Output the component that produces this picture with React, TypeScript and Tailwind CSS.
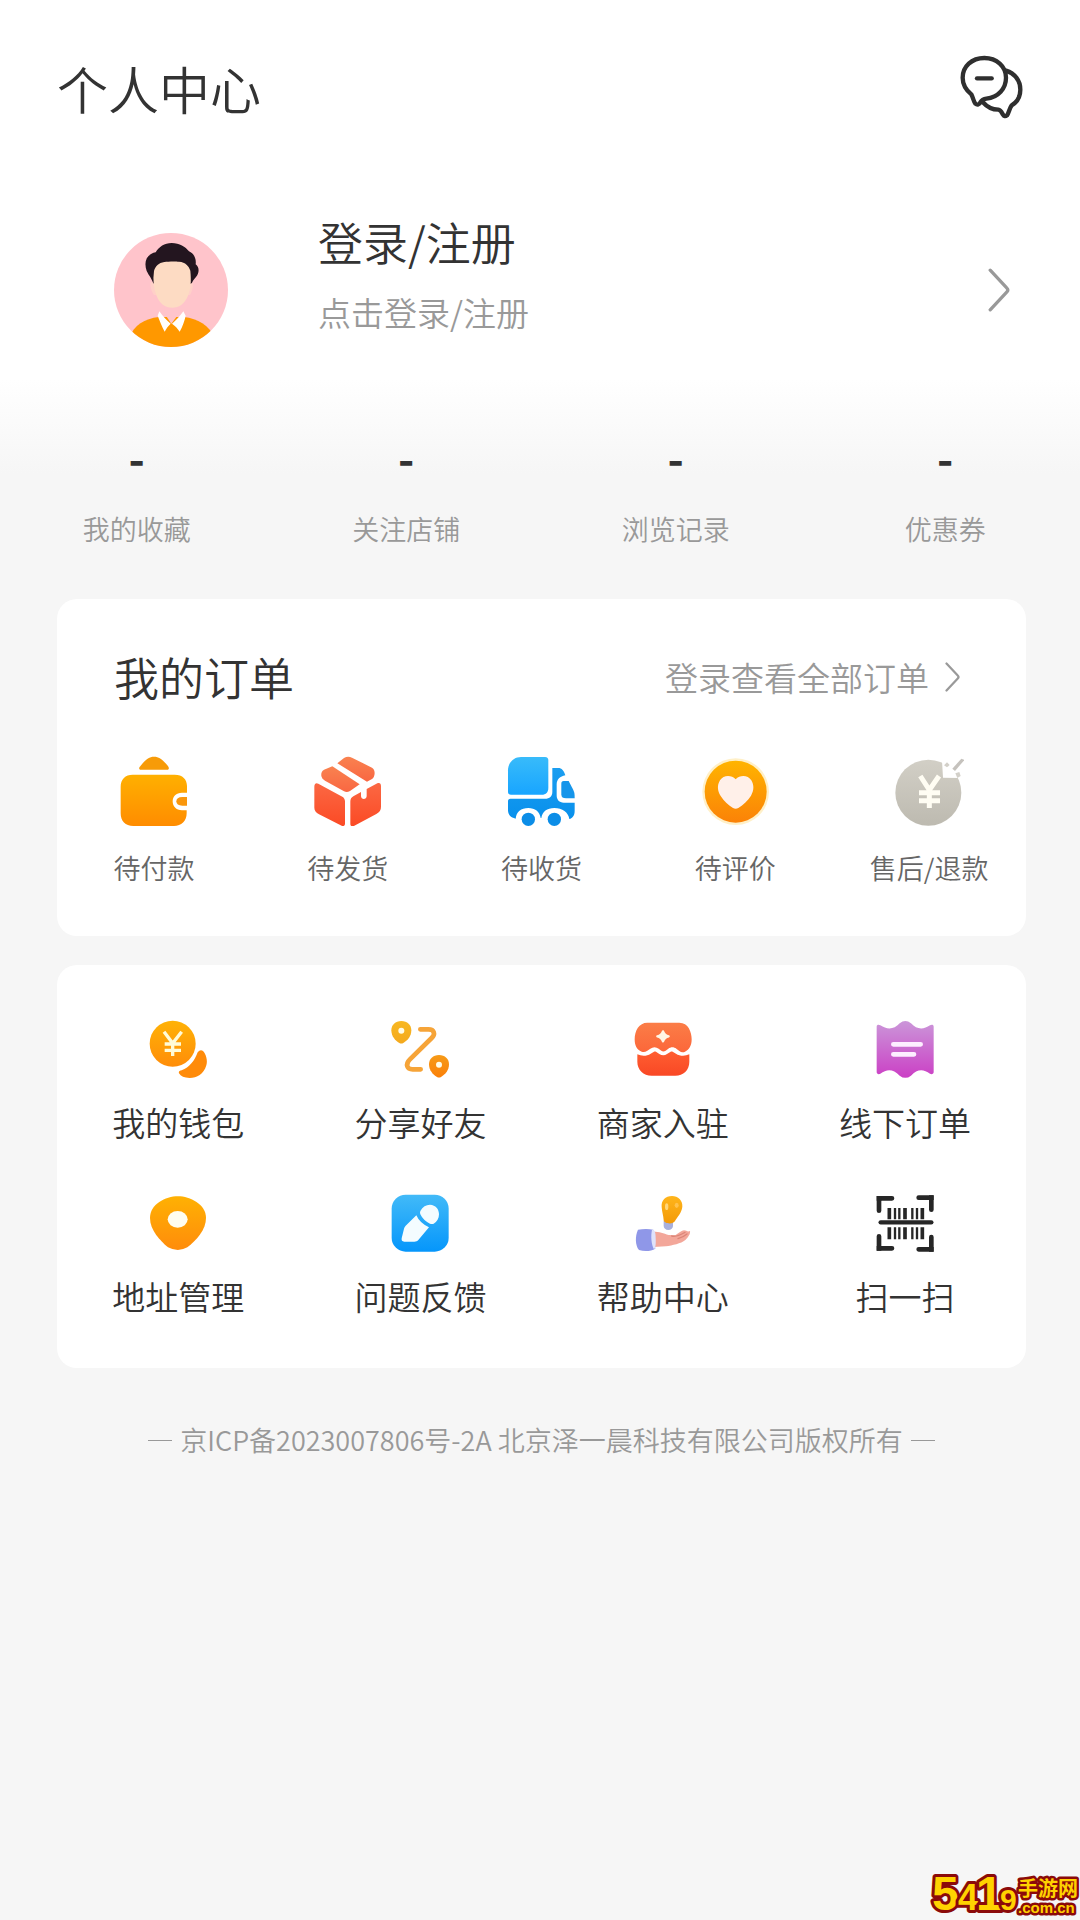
import type { ReactNode } from "react";

type Item = { name: string; icon: ReactNode };

const Gradient = ({ id, from, to }: { id: string; from: string; to: string }) => (
  <defs>
    <linearGradient id={id} x1="0" y1="0" x2="0" y2="1">
      <stop offset="0" stopColor={from} />
      <stop offset="1" stopColor={to} />
    </linearGradient>
  </defs>
);

const MessageIcon = () => (
  <svg
    viewBox="90 45 192 198"
    className="w-16 h-[66px]"
    fill="none"
    stroke="#2f2f2f"
    strokeWidth="13"
    strokeLinecap="round"
    strokeLinejoin="round"
  >
    <path d="M163 54C125 54 98 80 98 113c0 22 9 36 26 50 5 9 7 22 12 28 6 5 12 3 15-4 4-7 9-10 18-11 36-4 59-31 59-63 0-34-28-59-65-59Z" />
    <path d="M228 92c27 9 43 30 43 57 0 22-9 37-26 47-7 9-8 22-14 30-5 4-9 3-12-2-4-7-7-14-14-15-18 0-32-6-47-23" />
    <path d="M141 115h44" />
  </svg>
);

const Chevron = ({ className }: { className: string }) => (
  <svg
    viewBox="0 0 20 40"
    className={className}
    fill="none"
    stroke="#999"
    strokeWidth="3"
    strokeLinecap="round"
    strokeLinejoin="round"
  >
    <path d="M2 2 17 18q2 2 0 4L2 38" />
  </svg>
);

const Avatar = () => (
  <svg viewBox="72 69 342 342" className="size-[114px]">
    <clipPath id="avatar-clip">
      <circle cx="243" cy="240" r="171" />
    </clipPath>
    <g clipPath="url(#avatar-clip)">
      <rect x="72" y="69" width="342" height="342" fill="#ffc4cb" />
      <path d="M120 380c10-32 45-55 86-59h76c41 4 76 27 90 59v40H120Z" fill="#ff9800" />
      <path d="M224 285h42v26l-22 30-20-30Z" fill="#ffc4cb" />
      <path d="M208 304c10 14 22 28 34 37-7 6-13 14-18 24-9-16-16-36-21-48ZM280 304c-10 14-22 28-34 37 9 6 17 14 23 24 9-16 15-34 18-48Z" fill="#fff" />
      <path d="M190 221c-6-18-12-22-20-38-9-26-2-50 27-56 10-17 26-28 48-28 24 0 41 11 52 25 17 8 22 24 20 39 12 9 11 25 1 38-8 9-10 12-14 22Z" fill="#23151f" />
      <path d="M181 218c3-3 8 0 10 3h112c2-3 6-3 6 2 0 13-4 24-9 32H192c-6-8-11-21-11-37Z" fill="#ffd0c8" />
      <path d="M192 183c4-14 14-25 31-27 12-2 34-2 44-1 20 2 29 12 34 27 3 30 2 54-7 75-11 25-27 36-47 36-22 0-38-12-47-35-9-22-12-47-8-75Z" fill="#fddbc3" />
    </g>
  </svg>
);

const orders: Item[] = [
  {
    name: "待付款",
    icon: (
      <svg viewBox="87 48 210 210" className="size-[70px]">
        <Gradient id="pay" from="#ffb000" to="#ff8c00" />
        <path d="M150 89c-5-3-2-8 2-12 16-20 25-27 40-27s25 8 40 26c4 5 7 10 2 13Z" fill="#f79b08" />
        <path d="M128 104h126c24 0 37 14 37 34v20h-15c-18 0-28 12-28 26s10 27 28 27h14v9c0 24-16 38-38 38H130c-24 0-38-15-38-38v-80c0-22 14-36 36-36Z" fill="url(#pay)" />
        <path d="M291 171h-14c-12 0-18 5-18 13s6 13 18 13h14Z" fill="#fa970c" />
      </svg>
    ),
  },
  {
    name: "待发货",
    icon: (
      <svg viewBox="669 48 210 210" className="size-[70px]">
        <Gradient id="ship-top" from="#f98250" to="#f96742" />
        <Gradient id="ship" from="#fb6843" to="#fb4a25" />
        <path d="M742 70l20-16c8-5 16-5 24-1l60 30c8 5 9 15 7 23-1 7-5 12-14 15l-8 4Z" fill="url(#ship-top)" />
        <path d="M727 79l82 54-29 20c-7 4-12 4-18 1l-57-32c-14-8-15-26-3-33Z" fill="url(#ship-top)" />
        <path d="M685 131l72 39c5 3 8 8 8 14v67c0 6-5 9-10 6l-68-34c-9-5-14-11-14-20v-63c0-9 5-13 12-9Z" fill="url(#ship)" />
        <path d="M862 130c7-3 11 1 11 8v62c0 10-4 16-14 22l-66 35c-7 4-12 1-12-6v-67c0-7 3-12 9-15l23-13v12c0 12 17 12 17 0v-21Z" fill="url(#ship)" />
      </svg>
    ),
  },
  {
    name: "待收货",
    icon: (
      <svg viewBox="79 48 210 210" className="size-[70px]">
        <Gradient id="truck-box" from="#38bbfa" to="#18a5ff" />
        <Gradient id="truck" from="#1b9ef0" to="#0890ec" />
        <path d="M124 51h72c7 0 10 4 10 10v82c0 14-7 21-20 21H94c-6 0-9-3-9-9V91c0-22 16-40 39-40Z" fill="url(#truck-box)" />
        <path d="M218 84h18c10 0 17 8 21 22-16 3-26 12-26 27v33c0 14 8 22 21 22h33v24c0 14-6 22-16 25-3-20-21-33-45-33-22 0-36 11-39 30h-2c-3-19-17-30-37-30-22 0-36 11-38 32-15-3-23-12-23-25v-28c0-4 3-7 7-7h104c14 0 22-7 22-21Z" fill="url(#truck)" />
        <path d="M252 123h15l14 27c4 8 4 14 4 25h-26c-9 0-14-3-14-12v-32c0-5 2-8 7-8Z" fill="#1595ea" />
        <circle cx="146" cy="238" r="20" fill="#0b8de7" />
        <circle cx="224" cy="238" r="20" fill="#0b8de7" />
      </svg>
    ),
  },
  {
    name: "待评价",
    icon: (
      <svg viewBox="660 48 210 210" className="size-[70px]">
        <Gradient id="rate" from="#ffb400" to="#fb8207" />
        <circle cx="767" cy="155" r="100" fill="#fff0c8" />
        <circle cx="767" cy="155" r="93" fill="url(#rate)" />
        <path d="M767 118c-13-14-37-13-47 3-9 15-8 31 2 47 10 15 24 29 37 36q8 5 16 0c15-9 29-23 38-37 10-17 9-32 1-46-10-16-34-17-47-3Z" fill="#fff0e9" />
      </svg>
    ),
  },
  {
    name: "售后/退款",
    icon: (
      <svg viewBox="162 48 210 210" className="size-[70px]">
        <Gradient id="refund" from="#d2cfc6" to="#bdbab0" />
        <circle cx="265" cy="158" r="99" fill="url(#refund)" />
        <path d="M306 62l21 18 18-14 22 16-6 32-52-1Z" fill="#fff" />
        <path d="M364 56l9 4-28 33-8-7Z" fill="#c5c2bd" />
        <path d="M312 76l9-9 8 8-8 7ZM346 100l12-4 4 12-10 6Z" fill="#d3d0c9" />
        <path d="M241 108l27 42 29-42M268 148v56M237 158h63M237 182h63" fill="none" stroke="#fffdf3" strokeWidth="15" />
      </svg>
    ),
  },
];

const services: Item[] = [
  {
    name: "我的钱包",
    icon: (
      <svg viewBox="177 60 174 174" className="size-[58px]">
        <Gradient id="coin" from="#ffb206" to="#ff8d09" />
        <circle cx="248" cy="131" r="69" fill="url(#coin)" />
        <path d="M323 157c7-10 16-8 21 3 7 13 8 25 5 36-8 27-28 38-50 38-16 0-27-5-32-14-2-6 2-8 8-9 23-8 39-29 48-54Z" fill="#ff8b09" />
        <path d="M222 95l26 35 27-35M248 128v40M224 132h49M224 151h49" fill="none" stroke="#fffbd8" strokeWidth="10" />
      </svg>
    ),
  },
  {
    name: "分享好友",
    icon: (
      <svg viewBox="904 60 174 174" className="size-[58px]">
        <Gradient id="pin-a" from="#f8b822" to="#f4a91d" />
        <Gradient id="pin-b" from="#f69b18" to="#fb8008" />
        <path d="M935 63c-18 0-30 12-30 28 0 17 11 31 24 38q6 3 12 0c14-8 24-21 24-38 0-16-12-28-30-28Z" fill="url(#pin-a)" />
        <circle cx="935" cy="92" r="9" fill="#fffce8" />
        <path d="M1048 165c-18 0-30 12-30 28 0 17 11 31 24 38q6 3 12 0c14-8 24-21 24-38 0-16-12-28-30-28Z" fill="url(#pin-b)" />
        <circle cx="1048" cy="194" r="9" fill="#fffce8" />
        <path d="M992 88h24c18 0 22 14 10 26l-66 65c-14 14-8 29 9 29h24" fill="none" stroke="#f6a438" strokeWidth="14" strokeLinecap="round" />
      </svg>
    ),
  },
  {
    name: "商家入驻",
    icon: (
      <svg viewBox="130 60 174 174" className="size-[58px]">
        <Gradient id="shop-top" from="#fb7d47" to="#fc673a" />
        <Gradient id="shop" from="#ff5e31" to="#f94825" />
        <path d="M170 68h96c27 0 37 28 37 50 0 18-7 31-20 37-6 3-12 2-17-2l-9-7c-7-6-17-6-24 0l-8 6c-5 3-9 3-13 0l-8-6c-8-6-17-6-25 0l-9 6c-6 4-11 5-17 3-15-6-21-19-21-37 0-26 13-50 38-50Z" fill="url(#shop-top)" />
        <path d="M140 163c13 6 28 6 40-2l10-6c2-1 4-1 6 0l10 7c8 5 16 5 23 0l11-7c2-1 4-1 6 0l10 6c12 8 27 8 40 2v22c0 26-18 42-42 42h-71c-25 0-43-18-43-42Z" fill="url(#shop)" />
        <path d="M217 94q4 12 17 15-13 3-17 15-4-12-17-15 13-3 17-15Z" fill="#fff6e6" stroke="#fff6e6" strokeWidth="7" strokeLinejoin="round" />
      </svg>
    ),
  },
  {
    name: "线下订单",
    icon: (
      <svg viewBox="856 60 174 174" className="size-[58px]">
        <Gradient id="ticket" from="#cb96d9" to="#cb3fc5" />
        <path d="M858 80c0-6 6-7 11-4 20 13 40 14 58-6q17-14 34 0c18 20 38 19 57 6 5-3 11-2 11 4v136c0 6-6 8-11 5-20-15-38-15-57 6q-17 13-34 0c-20-21-38-21-58-6-5 3-11 1-11-5Z" fill="url(#ticket)" />
        <path d="M908 133h82M908 163h62" stroke="#fdeeff" strokeWidth="14" strokeLinecap="round" />
      </svg>
    ),
  },
  {
    name: "地址管理",
    icon: (
      <svg viewBox="179 42 174 174" className="size-[58px]">
        <Gradient id="address" from="#ffb103" to="#ff8c0b" />
        <path d="M266 49c-38 0-84 24-84 65 0 36 30 68 54 88q30 16 58 0c28-22 56-53 56-88 0-41-48-65-84-65Z" fill="url(#address)" />
        <ellipse cx="265" cy="118" rx="30" ry="25" fill="#fffdf0" />
      </svg>
    ),
  },
  {
    name: "问题反馈",
    icon: (
      <svg viewBox="904 42 174 174" className="size-[58px]">
        <Gradient id="feedback" from="#42baf8" to="#0596fb" />
        <rect x="906" y="44" width="171" height="171" rx="42" fill="url(#feedback)" />
        <path d="M980 106q10 23 38 36l-32 38c-3 4-7 5-12 5h-30c-7 0-9-4-8-10l7-29q1-5 5-9ZM992 93c7-13 17-19 29-19 17 1 27 13 27 29 0 13-6 22-16 28q-5 2-11 0-20-9-29-28-2-5 0-10Z" fill="#f4fcff" />
      </svg>
    ),
  },
  {
    name: "帮助中心",
    icon: (
      <svg viewBox="130 42 174 174" className="size-[58px]">
        <Gradient id="bulb" from="#ffb51b" to="#f39a08" />
        <path d="M219 122h28v16c0 7-6 12-14 12s-14-5-14-12Z" fill="#a9b0dc" />
        <path d="M244 48c-20 0-33 14-31 33 1 15 5 25 6 40 1 11 29 13 34 2 7-13 20-24 22-43 2-18-13-32-31-32Z" fill="url(#bulb)" />
        <ellipse cx="228" cy="80" rx="5" ry="10" fill="#ffd67a" />
        <ellipse cx="258" cy="76" rx="6" ry="8" fill="#ffc24d" />
        <path d="M188 155c19 0 30 5 46 10l20 1c10-7 19-14 26-15 8 0 10 6 18 2 2 8-6 20-14 27-13 11-39 16-58 19l-38 2Z" fill="#f3a79a" />
        <path d="M243 168c16 4 28-4 40-11M262 176c11-3 20-8 27-14" fill="none" stroke="#db8578" strokeWidth="4" strokeLinecap="round" />
        <path d="M142 149c15-3 33-3 46 0l6 57c-12 8-33 9-49 4-12-14-12-42-3-61Z" fill="#8f97e8" />
        <path d="M184 149c8 0 11 7 11 25 1 17 0 30-5 34-8-15-10-40-6-59Z" fill="#dfe2fb" />
      </svg>
    ),
  },
  {
    name: "扫一扫",
    icon: (
      <svg viewBox="856 42 174 174" className="size-[58px]" stroke="#262626" fill="none">
        <path d="M904 55h-39v37M984 53h38v36M904 205h-39v-36M984 208h38v-37" strokeWidth="14" strokeLinecap="round" />
        <path d="M858 48h14v14h-14ZM1015 46h14v14h-14ZM858 198h14v14h-14ZM1015 201h14v14h-14Z" fill="#262626" stroke="none" />
        <path d="M870 127h152" strokeWidth="13" strokeLinecap="round" />
        <path d="M896 84v34M896 142v36M943 84v34M943 142v36M995 84v34M995 142v36" strokeWidth="11" />
        <path d="M913 84v34M913 142v36M926 84v34M926 142v36M965 84v34M965 142v36M979 84v34M979 142v36" strokeWidth="7" />
      </svg>
    ),
  },
];

const stats = ["我的收藏", "关注店铺", "浏览记录", "优惠券"];

const SiteMark = () => (
  <svg
    viewBox="0 0 150 54"
    className="absolute right-0 bottom-0 w-[150px] h-[54px] font-['Liberation_Sans','Noto_Sans_CJK_SC',sans-serif] font-bold"
    fill="#ffd200"
    stroke="#8b0a0a"
    strokeWidth="6"
    strokeLinejoin="round"
    paintOrder="stroke"
  >
    <text x="2" y="44" fontSize="48">5</text>
    <text x="28" y="44" fontSize="36">4</text>
    <text x="46" y="44" fontSize="48">1</text>
    <text x="70" y="44" fontSize="30">9</text>
    <text x="88" y="30" fontSize="20" strokeWidth="5">手游网</text>
    <text x="88" y="47" fontSize="15" strokeWidth="5">.com.cn</text>
  </svg>
);

const App = () => {
  return (
    <div className="relative min-h-screen bg-[#f6f6f6] font-['Noto_Sans_CJK_SC','Noto_Sans',sans-serif] font-[350] text-[#333]">
      <div className="bg-linear-to-b from-white from-80% to-[#f6f6f6]">
        <header className="flex items-center justify-between pl-[57px] pr-14 pt-[54px]">
          <h1 className="text-[51px] leading-[68px]">个人中心</h1>
          <button type="button" aria-label="消息">
            <MessageIcon />
          </button>
        </header>

        <a href="#login" className="flex items-center pl-[114px] pr-[70px] pt-[90px] pb-[106px]">
          <Avatar />
          <div className="flex-1 pl-[90px] pb-8">
            <p className="text-[45px] leading-[60px]">登录/注册</p>
            <p className="pt-4 text-[33px] leading-12 text-[#999]">点击登录/注册</p>
          </div>
          <Chevron className="w-[22px] h-11" />
        </a>
      </div>

      <nav className="grid grid-cols-4 -mt-[41px] pl-0.5 text-center">
        {stats.map((name) => (
          <a key={name} href="#stats">
            <p className="text-[44px] leading-12 font-bold">-</p>
            <p className="pt-7 text-[27px] leading-10 text-[#999]">{name}</p>
          </a>
        ))}
      </nav>

      <main className="pl-[57px] pr-[54px] pt-[50px]">
        <section className="bg-white rounded-[20px] pt-[46px] pb-12">
          <div className="flex items-center justify-between pl-[57px] pr-[66px]">
            <h2 className="text-[45px] leading-16">我的订单</h2>
            <a href="#orders" className="flex items-center gap-4 text-[33px] leading-12 text-[#999]">
              登录查看全部订单
              <Chevron className="w-[15px] h-[30px]" />
            </a>
          </div>

          <div className="grid grid-cols-5 pt-[47px]">
            {orders.map(({ name, icon }) => (
              <a key={name} href="#orders" className="flex flex-col items-center gap-[22px]">
                {icon}
                <span className="text-[27px] leading-10 text-[#666]">{name}</span>
              </a>
            ))}
          </div>
        </section>

        <section className="grid grid-cols-4 gap-y-12 bg-white rounded-[20px] mt-[29px] pt-[55px] pb-12">
          {services.map(({ name, icon }) => (
            <a key={name} href="#services" className="flex flex-col items-center gap-5">
              {icon}
              <span className="text-[33px] leading-12">{name}</span>
            </a>
          ))}
        </section>
      </main>

      <footer className="flex items-center justify-center gap-2 pl-[57px] pr-[54px] py-[52px] text-[27px] leading-10 text-[#999]">
        <span className="w-6 h-px bg-[#999]" />
        京ICP备2023007806号-2A 北京泽一晨科技有限公司版权所有
        <span className="w-6 h-px bg-[#999]" />
      </footer>

      <SiteMark />
    </div>
  );
};

export default App;
